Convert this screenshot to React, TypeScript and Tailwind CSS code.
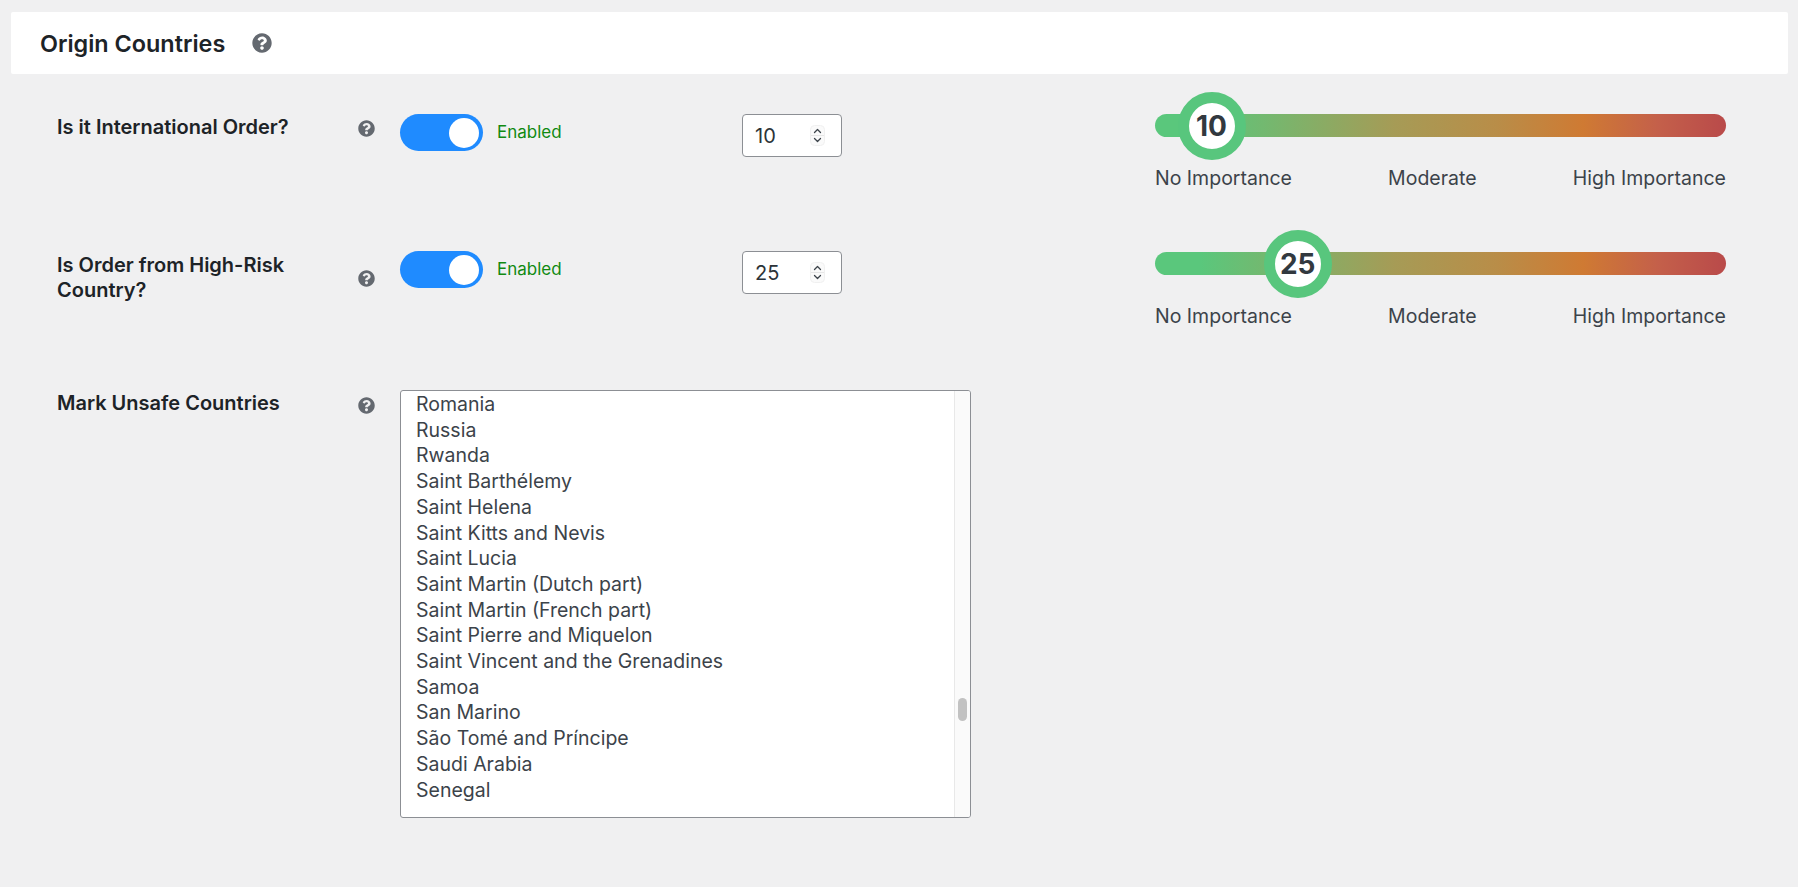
import React from 'react';
import { FaQuestionCircle } from 'react-icons/fa';

const countries = [
  'Romania',
  'Russia',
  'Rwanda',
  'Saint Barthélemy',
  'Saint Helena',
  'Saint Kitts and Nevis',
  'Saint Lucia',
  'Saint Martin (Dutch part)',
  'Saint Martin (French part)',
  'Saint Pierre and Miquelon',
  'Saint Vincent and the Grenadines',
  'Samoa',
  'San Marino',
  'São Tomé and Príncipe',
  'Saudi Arabia',
  'Senegal',
];

const Toggle: React.FC = () => (
  <div className="flex items-center gap-[14px]">
    <div className="flex h-[37px] w-[83px] items-center justify-end rounded-full bg-[#1f8bff] pr-[4px]">
      <div className="h-[30px] w-[30px] rounded-full bg-white" />
    </div>
    <span className="text-[17px] text-[#118a11]">Enabled</span>
  </div>
);

const NumberBox: React.FC<{ value: number }> = ({ value }) => (
  <div className="flex h-[43px] w-[100px] items-center justify-between rounded-[4px] border border-[#8c8f94] bg-white pl-[12px] pr-[16px] text-[20px] text-[#2c3338]">
    <span>{value}</span>
    <svg width="15" height="21" viewBox="0 0 15 21" fill="none">
      <rect x="0.5" y="0.5" width="14" height="20" rx="4" fill="#fafafa" stroke="#f0f0f0" />
      <line x1="1" y1="10.5" x2="14" y2="10.5" stroke="#e6e6e6" />
      <path d="M4.5 7.5 L7.5 4.5 L10.5 7.5" stroke="#3c434a" strokeWidth="1.3" strokeLinecap="round" strokeLinejoin="round" />
      <path d="M4.5 13.5 L7.5 16.5 L10.5 13.5" stroke="#3c434a" strokeWidth="1.3" strokeLinecap="round" strokeLinejoin="round" />
    </svg>
  </div>
);

const Slider: React.FC<{ value: number; className?: string }> = ({ value, className }) => (
  <div className={`w-[571px] ${className ?? ''}`}>
    <div className="relative h-[23px] rounded-full bg-[linear-gradient(90deg,#5ac77c_0%,#5ac77c_8%,#a69b56_42%,#b98d48_60%,#cf7a33_75%,#c4604a_88%,#b94a4a_100%)]">
      <div
        className="absolute top-1/2 flex h-[68px] w-[68px] -translate-x-1/2 -translate-y-1/2 items-center justify-center rounded-full border-[11px] border-[#58c67d] bg-white text-[28px] font-bold text-[#32393f]"
        style={{ left: `${value === 10 ? 9.9 : 25}%` }}
      >
        {value}
      </div>
    </div>
    <div className="mt-[29px] flex justify-between text-[19.5px] leading-[25px] text-[#3c434a]">
      <span>No Importance</span>
      <span>Moderate</span>
      <span>High Importance</span>
    </div>
  </div>
);

const Help: React.FC = () => <FaQuestionCircle className="text-[#646970]" size={17} />;

export default function App() {
  return (
    <div className="min-h-screen bg-[#f0f0f1] px-[11px] pt-[12px] font-['Inter',sans-serif]">
      <div className="flex h-[62px] w-[1777px] items-center rounded-[2px] bg-white pl-[29px]">
        <h2 className="pt-[2px] text-[23.4px] font-semibold text-[#1d2327]">Origin Countries</h2>
        <FaQuestionCircle className="ml-[27px] text-[#646970]" size={20} />
      </div>

      <div className="flex flex-col pl-[46px] pt-[40px]">
        <div className="flex h-[137px] items-start">
          <label className="w-[301px] pt-[1px] text-[20px] font-semibold leading-[25px] text-[#1d2327]">Is it International Order?</label>
          <div className="w-[42px] pt-[6px]"><Help /></div>
          <div className="w-[342px]"><Toggle /></div>
          <div className="w-[413px]"><NumberBox value={10} /></div>
          <Slider value={10} />
        </div>

        <div className="flex h-[139px] items-start">
          <label className="w-[301px] pt-[2px] text-[20px] font-semibold leading-[25px] text-[#1d2327]">
            Is Order from High-Risk
            <br />
            Country?
          </label>
          <div className="w-[42px] pt-[19px]"><Help /></div>
          <div className="w-[342px]"><Toggle /></div>
          <div className="w-[413px]"><NumberBox value={25} /></div>
          <Slider value={25} className="pt-[1px]" />
        </div>

        <div className="flex items-start">
          <label className="w-[301px] pt-[1px] text-[20px] font-semibold leading-[25px] text-[#1d2327]">Mark Unsafe Countries</label>
          <div className="w-[42px] pt-[7px]"><Help /></div>
          <div className="flex h-[428px] w-[571px] overflow-hidden rounded-[3px] border border-[#8c8f94] bg-white">
            <ul className="flex-1 pl-[15px] pt-[1px] text-[19.5px] leading-[25.7px] text-[#3c434a]">
              {countries.map((c) => (
                <li key={c}>{c}</li>
              ))}
            </ul>
            <div className="w-[16px] border-l border-[#e8e8e8] bg-[#fafafa] pl-[3px] pt-[307px]">
              <div className="h-[23px] w-[9px] rounded-full bg-[#c2c2c2]" />
            </div>
          </div>
        </div>
      </div>
    </div>
  );
}
